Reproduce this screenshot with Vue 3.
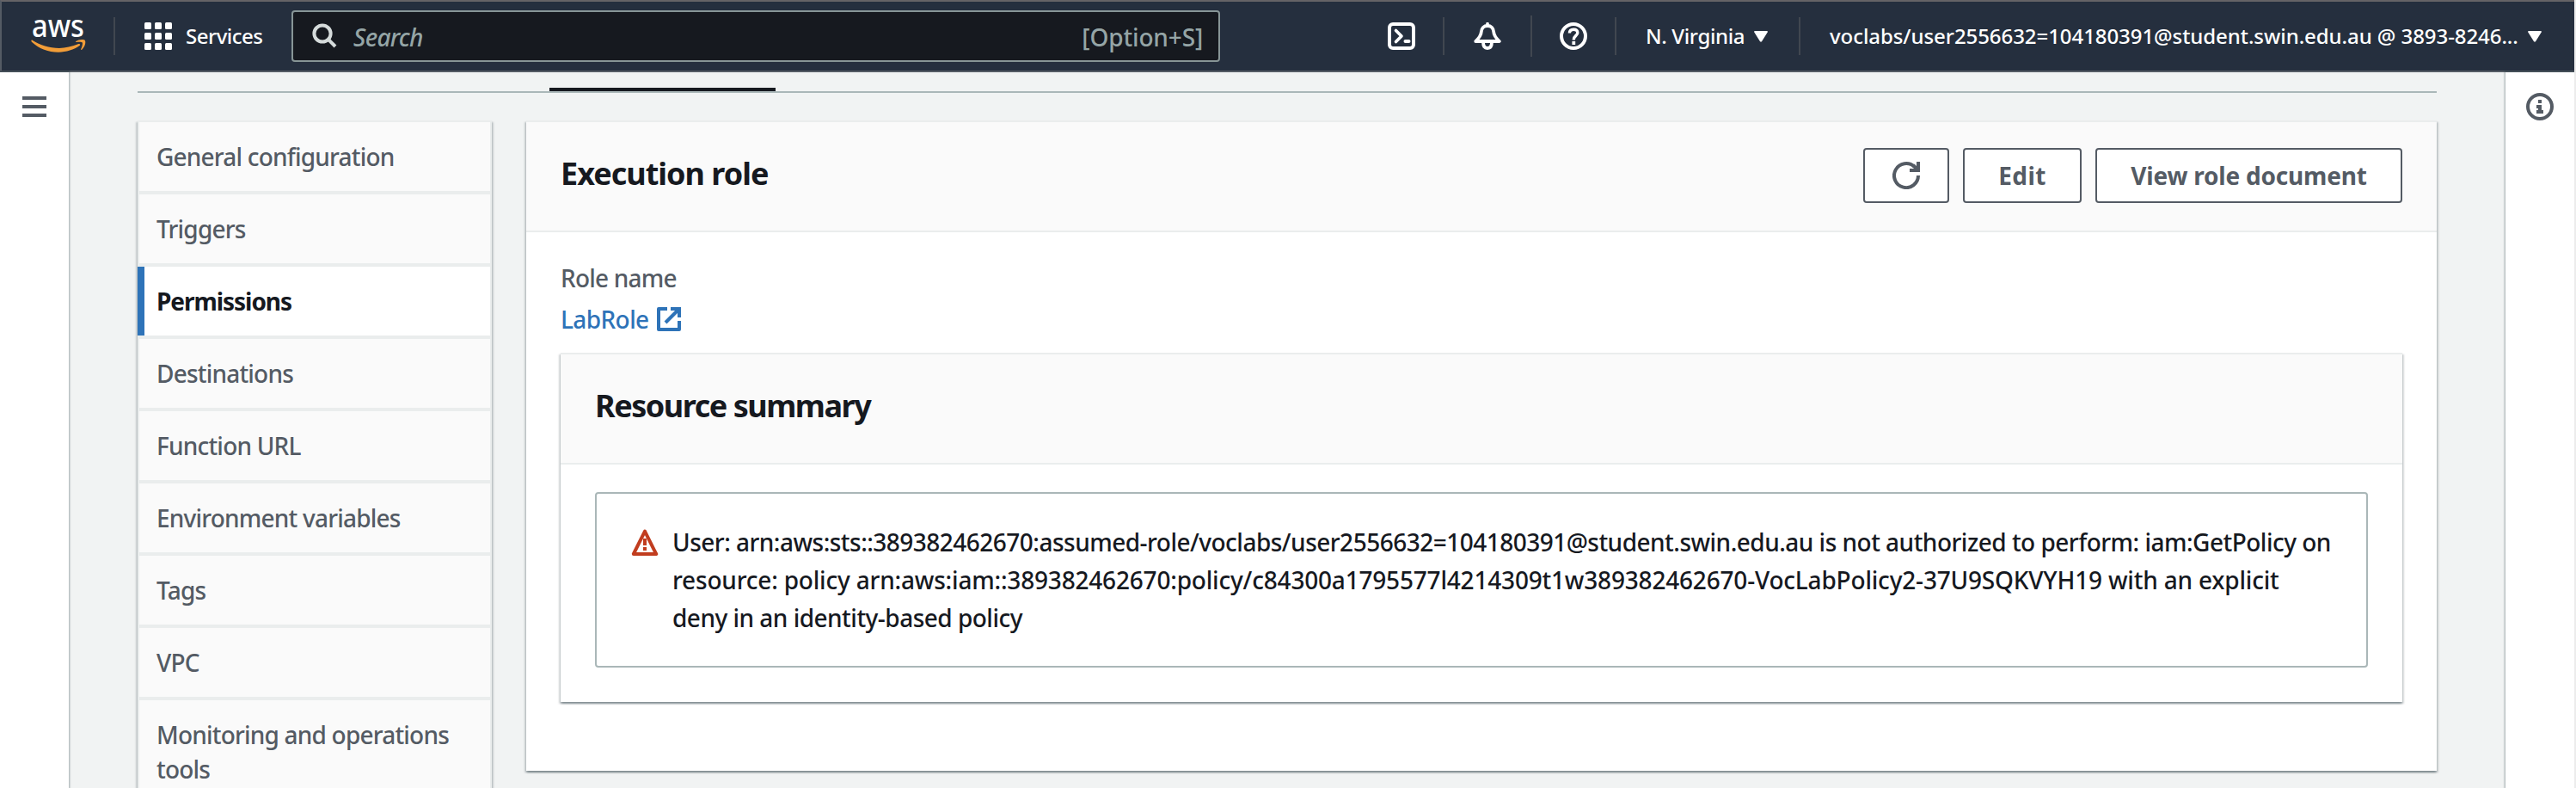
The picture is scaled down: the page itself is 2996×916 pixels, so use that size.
<script setup>
const items = [
  'General configuration',
  'Triggers',
  'Permissions',
  'Destinations',
  'Function URL',
  'Environment variables',
  'Tags',
  'VPC',
  'Monitoring and operations tools',
]
const active = 'Permissions'
const cells = [0, 12, 24]
</script>

<template>
  <div class="window">
    <header class="topbar">
      <svg class="logo" width="64" height="64" viewBox="0 -11 64 64">
        <text x="1" y="22" textLength="61" lengthAdjust="spacingAndGlyphs">aws</text>
        <g fill="#f29d38" transform="translate(0 -1.3)">
          <path d="M0.6 27 C0 28 0.6 28.7 1.2 29.2 C10 37 20 41 32 41 C41 41 50 38 56.6 33.4 C58 32.4 57 30.8 55.4 31.4 C48 34.6 40 36.2 33 36.2 C21 36.2 11 32.6 2 27.2 C1.4 26.8 0.9 26.7 0.6 27 Z" />
          <path d="M52.4 28.4 C55 26.4 59 25.8 62.4 26.8 C64.4 28.6 63 34.6 59.2 38 C58.4 38.6 57.8 38.2 58.2 37.4 C59.4 34.6 60.4 31 59.8 29.8 C59 28.8 55.6 29 52.8 29.4 C52 29.4 51.8 28.8 52.4 28.4 Z" />
        </g>
      </svg>
      <i class="rule rule-logo"></i>
      <svg class="grid-icon" width="32" height="32" viewBox="0 0 32 32" fill="#fff">
        <template v-for="y in cells" :key="y">
          <rect v-for="x in cells" :key="x" :x="x" :y="y" width="8" height="8" rx="1.5" />
        </template>
      </svg>
      <span class="services">Services</span>
      <div class="search">
        <svg width="30" height="30" viewBox="0 0 30 30" fill="none" stroke="#d5dbdb" stroke-width="4">
          <circle cx="12" cy="12" r="9.6" />
          <path d="M18.6 18.6 L27 27" />
        </svg>
        <span class="placeholder">Search</span>
        <span class="shortcut">[Option+S]</span>
      </div>
      <div class="tools">
        <svg width="32" height="32" viewBox="0 0 32 32" fill="none" stroke="#fff">
          <rect x="2" y="2" width="28" height="28" rx="4" stroke-width="4" />
          <path d="M9.5 9.5 L16 16 L9.5 22.5" stroke-width="3.6" stroke-linecap="round" stroke-linejoin="round" />
          <path d="M20.5 22 H24.5" stroke-width="4" stroke-linecap="round" />
        </svg>
        <i class="rule rule-a"></i>
        <svg class="bell" width="32" height="32" viewBox="0 0 32 32" fill="none" stroke="#fff" stroke-linejoin="round">
          <path d="M16 1.6 V4" stroke-width="3.6" stroke-linecap="round" />
          <path d="M2.2 22 C7 17.4 8.6 15 8.8 11 C9 6.4 12 4 16 4 C20 4 23 6.4 23.2 11 C23.4 15 25 17.4 29.8 22 Z" stroke-width="3.8" />
          <path d="M11 23 C11 28 12.6 30 16 30 C19.4 30 21 28 21 23" stroke-width="3.8" />
        </svg>
        <i class="rule rule-b"></i>
        <svg class="help" width="32" height="32" viewBox="0 0 32 32" fill="none" stroke="#fff">
          <circle cx="16" cy="16" r="14" stroke-width="4" />
          <path d="M11.4 12.6 C11.4 9.6 13.4 8.2 16.2 8.2 C19 8.2 20.8 9.8 20.8 12.2 C20.8 15.4 16.2 15.6 16.2 20.4" stroke-width="3.4" />
          <path d="M14.4 24 H18.2" stroke-width="4" />
        </svg>
        <i class="rule rule-c"></i>
        <span class="region">N. Virginia</span>
        <svg class="caret" width="16" height="13" viewBox="0 0 16 13"><path d="M0.6 0 H15.4 L16 1 L8.8 12.6 H7.2 L0 1 Z" fill="#fff" /></svg>
        <i class="rule rule-d"></i>
        <span class="account">voclabs/user2556632=104180391@student.swin.edu.au @ 3893-8246...</span>
        <svg class="caret" width="16" height="13" viewBox="0 0 16 13"><path d="M0.6 0 H15.4 L16 1 L8.8 12.6 H7.2 L0 1 Z" fill="#fff" /></svg>
      </div>
    </header>

    <div class="body">
      <aside class="rail rail-left">
        <svg width="28" height="24" viewBox="0 0 28 24" fill="#545b64">
          <rect width="28" height="4" /><rect y="10" width="28" height="4" /><rect y="20" width="28" height="4" />
        </svg>
      </aside>

      <main>
        <div class="tabs"><div class="tab-active"></div></div>
        <div class="columns">
          <nav>
            <a v-for="item in items" :key="item" :class="{ active: item === active }">{{ item }}</a>
          </nav>

          <section class="card outer">
            <div class="card-head">
              <h2>Execution role</h2>
              <div class="actions">
                <button class="refresh">
                  <svg width="32" height="32" viewBox="0 0 32 32">
                    <path d="M30 16 A14 14 0 1 1 25.6 5.9" fill="none" stroke="#545b64" stroke-width="4" />
                    <path d="M28 0 H32 V12 H20 V8 H28 Z" fill="#545b64" />
                    <path d="M24 4 L29 9" stroke="#545b64" stroke-width="4" />
                  </svg>
                </button>
                <button class="edit">Edit</button>
                <button class="view">View role document</button>
              </div>
            </div>
            <div class="role">
              <div class="label">Role name</div>
              <a class="link">
                <span>LabRole</span>
                <svg width="28" height="28" viewBox="0 0 28 28" fill="none" stroke="#2e73b8" stroke-width="4">
                  <path d="M12 2 H2 V26 H26 V16" stroke-linejoin="round" />
                  <path d="M16 2 H26 V12" />
                  <path d="M25 3 L10 18" />
                </svg>
              </a>

              <section class="card inner">
                <div class="card-head"><h2 class="summary">Resource summary</h2></div>
                <div class="alert">
                  <svg width="32" height="32" viewBox="0 0 32 32" fill="none" stroke="#c13d1f">
                    <path d="M16 3.6 L29.2 30 H2.8 Z" stroke-width="4" stroke-linejoin="round" />
                    <path d="M16 12 V20 M16 22 V26" stroke-width="4" />
                  </svg>
                  <p>
                    <span class="l1">User: arn:aws:sts::389382462670:assumed-role/voclabs/user2556632=104180391@student.swin.edu.au is not authorized to perform: iam:GetPolicy on</span>
                    <span class="l2">resource: policy arn:aws:iam::389382462670:policy/c84300a1795577l4214309t1w389382462670-VocLabPolicy2-37U9SQKVYH19 with an explicit</span>
                    <span class="l3">deny in an identity-based policy</span>
                  </p>
                </div>
              </section>
            </div>
          </section>
        </div>
      </main>

      <aside class="rail rail-right">
        <svg width="32" height="32" viewBox="0 0 32 32">
          <circle cx="16" cy="16" r="14" fill="none" stroke="#545b64" stroke-width="4" />
          <path d="M14 8 H18 V12 H14 Z M12 14 H18 V20 H20 V24 H12 V20 H14 V18 H12 Z" fill="#545b64" />
        </svg>
      </aside>
    </div>
  </div>
</template>

<style>
body {
  margin: 0;
  overflow: hidden;
}
</style>

<style scoped>
* {
  box-sizing: border-box;
}
.window {
  width: 2996px;
  height: 916px;
  overflow: hidden;
  display: flex;
  flex-direction: column;
  background: #f1f3f3;
  border-right: 2px solid #ececec;
  font-family: "Noto Sans", sans-serif;
  font-weight: 500;
  font-size: 28px;
  line-height: 44px;
  color: #16191f;
}
svg {
  display: block;
  flex: none;
}
.topbar {
  flex: none;
  height: 84px;
  display: flex;
  align-items: center;
  background: #252f3e;
  border-top: 2px solid #656366;
  border-left: 2px solid #545b64;
  border-bottom: 2px solid #545b64;
  color: #fff;
  font-size: 24px;
  white-space: nowrap;
}
.logo {
  margin-left: 34px;
  overflow: visible;
}
.logo text {
  font-family: "Noto Sans", sans-serif;
  font-size: 36px;
  font-weight: 500;
  fill: #fff;
}
.rule {
  flex: none;
  width: 2px;
  height: 44px;
  background: #414750;
}
.rule-logo {
  margin-left: 32px;
}
.grid-icon {
  margin-left: 34px;
}
.services {
  width: 88px;
  margin-left: 16px;
  letter-spacing: -0.5px;
}
.search {
  width: 1080px;
  height: 60px;
  margin-left: 35px;
  padding: 0 18px 0 22px;
  display: flex;
  align-items: center;
  background: #16191f;
  border: 2px solid #879596;
  border-radius: 4px;
  color: #95a5a6;
  font-size: 28px;
}
.placeholder {
  margin: 1px 0 0 18px;
  font-style: italic;
  letter-spacing: -0.7px;
}
.shortcut {
  margin: 1px 0 0 auto;
  letter-spacing: -0.15px;
}
.tools {
  display: flex;
  align-items: center;
  margin-left: 195px;
}
.rule-a {
  margin-left: 32px;
}
.bell {
  margin-left: 34px;
}
.rule-b {
  height: 48px;
  margin-left: 34px;
}
.help {
  margin-left: 32px;
}
.rule-c {
  margin-left: 32px;
}
.region {
  width: 113px;
  margin-left: 34px;
  letter-spacing: -0.36px;
}
.caret {
  margin-left: 13px;
}
.rule-d {
  margin-left: 36px;
}
.account {
  width: 799px;
  margin-left: 34px;
  letter-spacing: -0.07px;
}
.body {
  flex: 1;
  min-height: 0;
  display: flex;
}
.rail {
  flex: none;
  background: #fff;
  box-shadow: 0 0 2px 1px rgba(0, 28, 36, 0.35);
}
.rail-left {
  width: 80px;
  padding: 28px 26px;
}
.rail-right {
  width: 80px;
  padding: 24px 24px;
}
main {
  flex: 1;
  padding: 18px 80px 0;
}
.tabs {
  height: 6px;
  border-bottom: 2px solid #aab7b8;
}
.tab-active {
  width: 263px;
  height: 4px;
  margin-left: 479px;
  background: #16191f;
}
.columns {
  display: flex;
  align-items: flex-start;
  gap: 40px;
  margin-top: 32px;
}
nav,
.card {
  box-shadow: 0 2px 2px 0 rgba(0, 28, 36, 0.3), 2px 2px 2px 0 rgba(0, 28, 36, 0.15),
    -2px 2px 2px 0 rgba(0, 28, 36, 0.15);
}
nav {
  flex: none;
  width: 412px;
  background: #fafafa;
}
nav a {
  display: block;
  padding: 20px;
  border: 2px solid #eaeded;
  line-height: 40px;
  letter-spacing: -0.8px;
  color: #545b64;
}
nav a.active {
  padding-left: 22px;
  background: linear-gradient(#2e73b8, #2e73b8) left / 8px 100% no-repeat #fff;
  background-clip: padding-box;
  background-origin: padding-box;
  border-left: 0;
  font-weight: 700;
  letter-spacing: -1.05px;
  color: #16191f;
}
.card {
  background: #fff;
  border-top: 2px solid #eaeded;
}
.outer {
  width: 2222px;
  height: 756px;
}
.card-head {
  height: 128px;
  padding: 30px 40px 0;
  display: flex;
  justify-content: space-between;
  align-items: flex-start;
  background: #fafafa;
  border-bottom: 2px solid #eaeded;
}
h2 {
  margin: 8px 0 0;
  font-size: 36px;
  font-weight: 700;
  line-height: 44px;
  letter-spacing: -1px;
}
h2.summary {
  letter-spacing: -1.47px;
}
.actions {
  display: flex;
  gap: 16px;
}
button {
  height: 64px;
  padding: 0 0 1px;
  display: flex;
  align-items: center;
  justify-content: center;
  background: #fff;
  border: 2px solid #545b64;
  border-radius: 4px;
  font: 700 28px/44px "Noto Sans", sans-serif;
  color: #545b64;
}
.refresh {
  width: 100px;
  padding: 0;
}
.edit {
  width: 138px;
  letter-spacing: 0.4px;
}
.view {
  width: 357px;
  letter-spacing: -0.2px;
}
.role {
  padding: 31px 40px 0;
}
.label {
  color: #545b64;
  letter-spacing: -0.8px;
}
.link {
  display: flex;
  align-items: center;
  gap: 10px;
  margin-top: 4px;
  color: #2e73b8;
  letter-spacing: -0.6px;
}
.link span {
  width: 102px;
}
.inner {
  height: 406px;
  margin-top: 17px;
}
.alert {
  height: 204px;
  margin: 32px 40px 0;
  padding: 34px 40px 0;
  display: flex;
  gap: 16px;
  border: 2px solid #aab7b8;
  border-radius: 4px;
}
.alert svg {
  margin-top: 6px;
}
.alert p {
  margin: 0;
  white-space: nowrap;
}
.alert span {
  display: block;
}
.l1,
.l3 {
  letter-spacing: -0.515px;
}
.l2 {
  letter-spacing: -0.195px;
}
</style>
